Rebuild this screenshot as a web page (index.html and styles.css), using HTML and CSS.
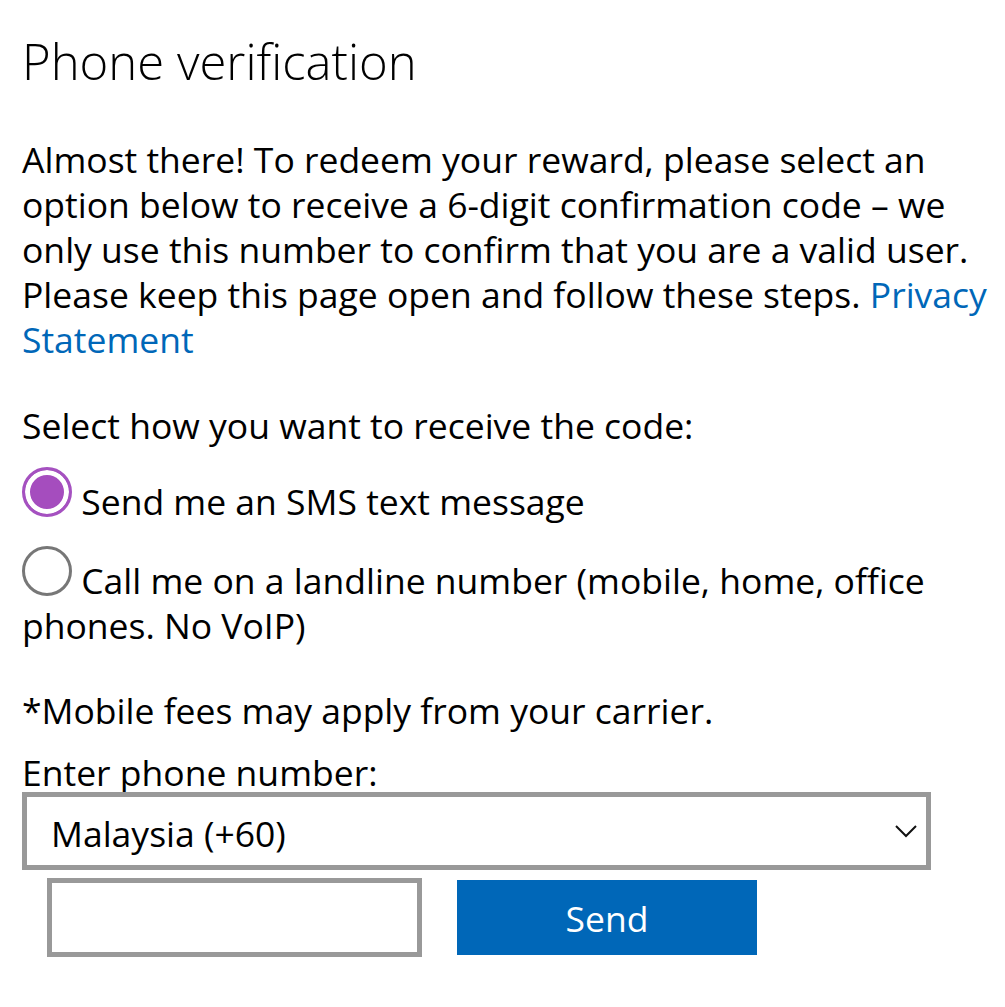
FILE: index.html
```html
<!DOCTYPE html>
<html lang="en">
<head>
<meta charset="utf-8">
<title>Phone verification</title>
<link rel="stylesheet" href="styles.css">
</head>
<body>
<div class="page">
    <h1 class="title">Phone verification</h1>

    <p class="intro">Almost there! To redeem your reward, please select an option below to receive a 6-digit confirmation code &ndash; we only use this number to confirm that you are a valid user. Please keep this page open and follow these steps. <a href="#" class="link">Privacy Statement</a></p>

    <p class="prompt">Select how you want to receive the code:</p>

    <div class="option option-first">
        <input type="radio" class="radio" name="method" id="sms" checked> <label for="sms">Send me an SMS text message</label>
    </div>
    <div class="option">
        <input type="radio" class="radio" name="method" id="call"> <label for="call">Call me on a landline number (mobile, home, office phones. No VoIP)</label>
    </div>

    <p class="note">*Mobile fees may apply from your carrier.</p>

    <div class="field-label">Enter phone number:</div>
    <div class="select-wrap">
        <select class="country">
            <option>Malaysia (+60)</option>
        </select>
        <svg class="chevron" width="22" height="13" viewBox="0 0 22 13">
            <polyline points="1,1 11,11 21,1" fill="none" stroke="#111" stroke-width="2"/>
        </svg>
    </div>

    <div class="send-row">
        <input type="text" class="phone">
        <button type="button" class="send">Send</button>
    </div>
</div>
</body>
</html>
```

FILE: styles.css
```css
body
{
    margin: 0;
    background: #fff;
    color: #000;
    font-family: "Open Sans", "Noto Sans", sans-serif;
    font-size: 35.5px;
    line-height: 45px;
}
.page
{
    padding: 0 5px 0 22px;
}
.title
{
    margin: 31px 0 0 0;
    font-size: 49px;
    line-height: 60px;
    font-weight: 350;
}
.intro
{
    margin: 46px 0 0 0;
}
.link
{
    color: #0067b8;
    text-decoration: none;
}
.prompt
{
    margin: 41px 0 0 0;
}
.option
{
    margin-top: 22px;
}
.option-first
{
    margin-top: 19px;
}
.radio
{
    -webkit-appearance: none;
    appearance: none;
    box-sizing: border-box;
    width: 50px;
    height: 50px;
    margin: 0;
    border: 3px solid #777;
    border-radius: 50%;
    background: #fff;
    vertical-align: -2px;
}
.radio:checked
{
    border-color: #a551c0;
    background: #a54dbe;
    box-shadow: inset 0 0 0 5px #fff;
}
.note
{
    margin: 40px 0 0 0;
}
.field-label
{
    margin-top: 19px;
    line-height: 40px;
}
.select-wrap
{
    position: relative;
    width: 909px;
}
.country
{
    -webkit-appearance: none;
    appearance: none;
    box-sizing: border-box;
    width: 909px;
    height: 78px;
    margin: 0;
    padding: 3px 0 0 24px;
    border: 5px solid #999;
    border-radius: 0;
    background: #fff;
    color: #000;
    font-family: inherit;
    font-size: 35.5px;
}
.chevron
{
    position: absolute;
    right: 14px;
    top: 33px;
}
.send-row
{
    display: flex;
    align-items: center;
    gap: 35px;
    margin: 8px 0 0 25px;
}
.phone
{
    box-sizing: border-box;
    width: 375px;
    height: 79px;
    margin: 0;
    border: 5px solid #999;
    border-radius: 0;
    font-family: inherit;
    font-size: 35.5px;
}
.send
{
    width: 300px;
    height: 75px;
    border: 0;
    background: #0067b8;
    color: #fff;
    font-family: inherit;
    font-size: 35.5px;
}
```
